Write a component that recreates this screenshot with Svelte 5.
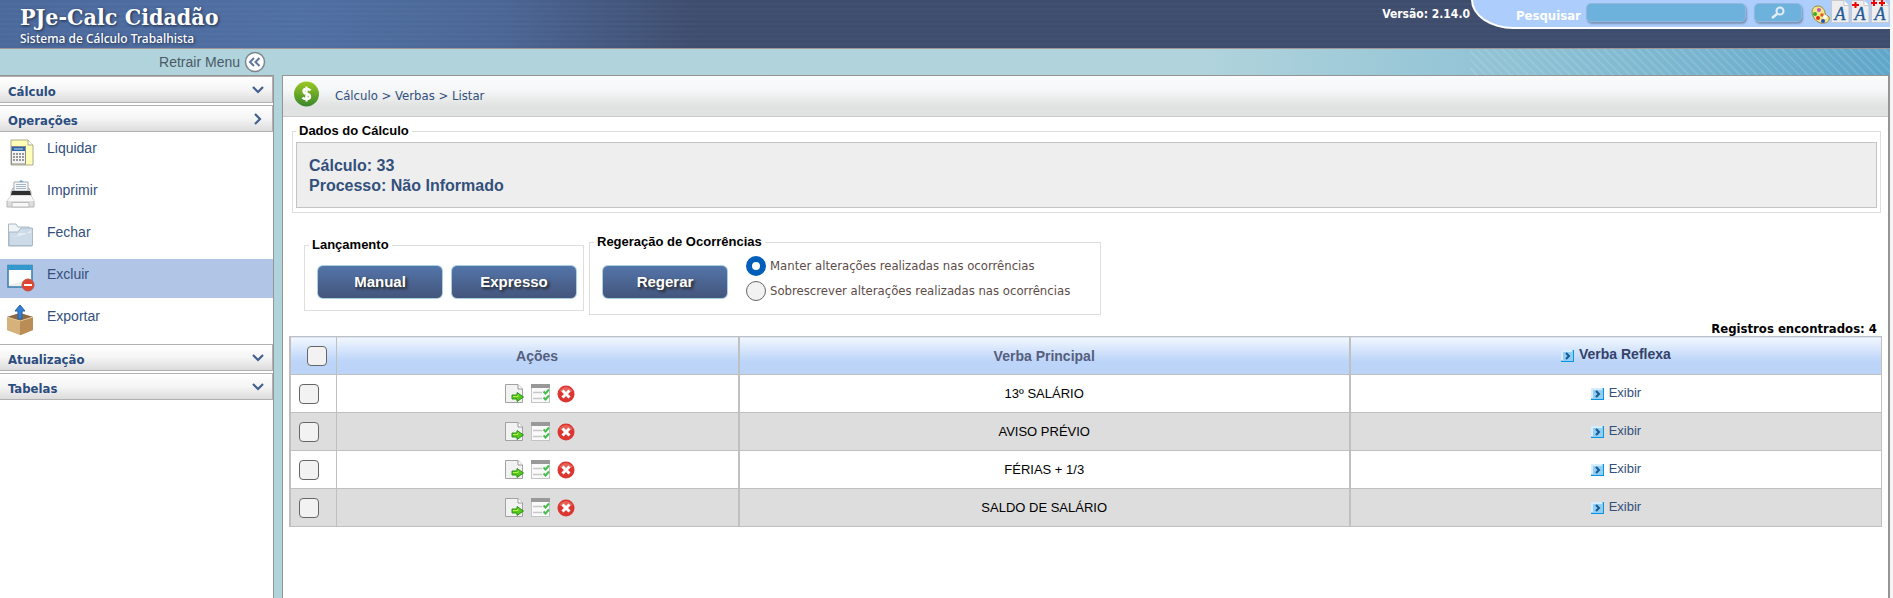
<script>
  const operations = [
    { label: 'Liquidar', icon: 'calc' },
    { label: 'Imprimir', icon: 'printer' },
    { label: 'Fechar', icon: 'folder' },
    { label: 'Excluir', icon: 'remove', active: true },
    { label: 'Exportar', icon: 'export' }
  ];
  const rows = $state([
    { name: '13º SALÁRIO', checked: false },
    { name: 'AVISO PRÉVIO', checked: false },
    { name: 'FÉRIAS + 1/3', checked: false },
    { name: 'SALDO DE SALÁRIO', checked: false }
  ]);
  let mode = $state('manter');
  let query = $state('');
  function toggleAll(e) {
    for (const r of rows) r.checked = e.currentTarget.checked;
  }
</script>

{#snippet section(label, open)}
  <button class="section" type="button" aria-expanded={open}>
    <span>{label}</span>
    <svg width="12" height="12" viewBox="0 0 12 12" fill="none" stroke="#43608f" stroke-width="2.2">
      {#if open}<path d="M3 1l5 5-5 5" />{:else}<path d="M1 3l5 5 5-5" />{/if}
    </svg>
  </button>
{/snippet}

{#snippet menuIcon(kind)}
  <svg width="30" height="32" viewBox="0 0 30 32">
    {#if kind === 'calc'}
      <path d="M5 5H22l5 5V30H5z" fill="#ffffb8" stroke="#aaa98c" />
      <path d="M22 5v5h5" fill="#fff" stroke="#aaa98c" />
      <rect x="5.500" y="11.500" width="14" height="17.500" fill="#f4f4f4" stroke="#8c8c8c" />
      <rect x="6" y="12" width="13" height="4" fill="#2d66a8" />
      <path d="M8 14h9" stroke="#c5dcf2" />
      <path d="M7 19h11M7 22h11M7 25h11" stroke="#999" stroke-width="2" stroke-dasharray="2 1" />
    {:else if kind === 'printer'}
      <path d="M13 5l2-2 3 2v3h-5z" fill="#4ba4df" />
      <path d="M5 15L7 11H23L25 15V19L28 24V30H1V24L5 19z" fill="#dedede" stroke="#b4b4b4" />
      <path d="M8 5H22V14H8z" fill="#f5f8fa" stroke="#a3abb2" />
      <path d="M10 7.500h10M10 9.500h10M10 11.500h10" stroke="#a7b4c0" />
      <path d="M6 14H24L25 18H5z" fill="#2f2f2f" />
      <path d="M5 19H25L28 24H1z" fill="#f8f8f8" />
      <path d="M6 25.500H23V30H6z" fill="#f7f7f7" stroke="#bcbcbc" />
    {:else if kind === 'folder'}
      <path d="M2.500 5H10l2 3h11l3 3v16H2.500z" fill="#eff3f6" stroke="#aab8c4" />
      <path d="M3 13H12l3-4H26.500V26.500H3z" fill="#cddae8" stroke="#a9bacb" />
      <path d="M4 17Q17 19 25 11V14H13l-2 3z" fill="#eef4f9" opacity=".7" />
    {:else if kind === 'remove'}
      <path d="M2 4.500H26V26H2z" fill="#eee" stroke="#397fac" stroke-width="1.500" />
      <path d="M2 4H26V9H2z" fill="#3497ce" />
      <path d="M3 9h22v9L3 24z" fill="#fff" />
      <circle cx="22" cy="24" r="6" fill="#e04434" stroke="#bd5646" />
      <path d="M18 24h8" stroke="#fff" stroke-width="2" />
    {:else}
      <path d="M1 14L14 10L27 14V27L15 32L1 27z" fill="#c9a066" />
      <path d="M1 14L14 18L27 14L14 10z" fill="#8b6944" />
      <path d="M14 18V32L1 27V14z" fill="#d5b17c" />
      <path d="M14 18V32L27 27V14z" fill="#b98d55" />
      <path d="M14 2l5 6h-3v8h-4V8H9z" fill="#347fd1" stroke="#2461a3" />
      <path d="M1 14l13 4 13-4" fill="none" stroke="#e5c893" />
    {/if}
  </svg>
{/snippet}

{#snippet arrow()}
  <svg class="arrow" width="13" height="12" viewBox="0 0 13 12">
    <rect width="13" height="12" fill="#91cdf4" />
    <path d="M0 0H11V2H2V10H0z" fill="#d5edff" />
    <path d="M12 0h1v12H0v-1h12z" fill="#0a93df" />
    <path d="M5 3l3 3-3 3" fill="none" stroke="#145b91" stroke-width="2" />
  </svg>
{/snippet}

{#snippet docA(plus)}
  <svg class="doc" width="19" height="23" viewBox="0 0 19 23">
    <path d="M.500 .500H13l5 5V22.500H.500z" fill="#eee" stroke="#c7c9cc" />
    <path d="M13 .500v5h5" fill="#fff" stroke="#c7c9cc" />
    <text x="9" y="20" text-anchor="middle" class="glyph">A</text>
    {#if plus === 1}<path d="M1 5h7M4.500 2v6" stroke="#f30000" stroke-width="2" />{/if}
    {#if plus === 2}<path d="M0 3h6M3 0v6M8 3h6M11 0v6" stroke="#f30000" stroke-width="2" />{/if}
  </svg>
{/snippet}

<div class="page">
  <header class="top">
    <div class="brand">
      <h1>PJe-Calc Cidadão</h1>
      <p>Sistema de Cálculo Trabalhista</p>
    </div>
    <div class="version">Versão: 2.14.0</div>
    <form class="search" onsubmit={(e) => e.preventDefault()}>
      <label for="q">Pesquisar</label>
      <input id="q" type="text" bind:value={query} />
      <button class="go" type="submit" aria-label="Pesquisar">
        <svg width="16" height="14" viewBox="0 0 16 14" fill="none" stroke="#e3eefa">
          <circle cx="10" cy="5" r="3.500" stroke-width="2" />
          <path d="M7 8L2 12" stroke-width="2.500" />
        </svg>
      </button>
      <div class="tools">
        <button type="button" aria-label="Contraste">
          <svg width="19" height="19" viewBox="0 0 19 19">
            <path d="M7 1C1 1 0 7 2 11c2 5 7 8 11 7 4 0 6-3 5-6-1-2-4-1-4-4 0-3-3-7-7-7z" fill="#f4e684" stroke="#98883a" />
            <circle cx="8" cy="5" r="2" fill="#c353bb" />
            <circle cx="4" cy="9" r="2" fill="#2fae31" />
            <circle cx="7" cy="13" r="2" fill="#e02a20" />
            <circle cx="11" cy="10" r="1.800" fill="#e45b21" />
            <circle cx="12" cy="16" r="2" fill="#2750c6" />
            <circle cx="14" cy="12" r="2" fill="#fff" />
          </svg>
        </button>
        <button type="button" aria-label="Fonte normal">{@render docA(0)}</button>
        <button type="button" aria-label="Fonte maior">{@render docA(1)}</button>
        <button type="button" aria-label="Fonte muito maior">{@render docA(2)}</button>
      </div>
    </form>
  </header>

  <div class="strip">
    <button class="collapse" type="button">
      Retrair Menu
      <svg width="22" height="22" viewBox="0 0 22 22">
        <circle cx="11" cy="11" r="9.500" fill="#fff" stroke="#7d8790" stroke-width="1.500" />
        <path d="M10 7L6 11l4 4M15.500 7L11.500 11l4 4" fill="none" stroke="#5f76a0" stroke-width="2" />
      </svg>
    </button>
  </div>

  <div class="body">
    <nav class="side">
      {@render section('Cálculo', false)}
      {@render section('Operações', true)}
      <ul>
        {#each operations as op}
          <li class:active={op.active}>
            <a href="#{op.icon}">{@render menuIcon(op.icon)}<span>{op.label}</span></a>
          </li>
        {/each}
      </ul>
      {@render section('Atualização', false)}
      {@render section('Tabelas', false)}
    </nav>

    <main>
      <div class="crumbs">
        <svg width="26" height="26" viewBox="0 0 26 26">
          <defs>
            <linearGradient id="coin" x2="0" y2="1">
              <stop offset="0" stop-color="#9bc922" />
              <stop offset="1" stop-color="#38862c" />
            </linearGradient>
          </defs>
          <circle cx="12.500" cy="13" r="12.500" fill="url(#coin)" />
          <path d="M16.500 9.500Q15.500 8 12.500 8Q9.500 8 9.500 10.200Q9.500 12.200 12.500 12.800Q16 13.400 16 15.800Q16 18 12.500 18Q9.500 18 8.500 16.500M12.500 5.500V20.500" fill="none" stroke="#fff" stroke-width="2.400" />
        </svg>
        <span>Cálculo &gt; Verbas &gt; Listar</span>
      </div>

      <div class="content">
        <fieldset class="data">
          <legend>Dados do Cálculo</legend>
          <div class="info">
            <div>Cálculo: 33</div>
            <div>Processo: Não Informado</div>
          </div>
        </fieldset>

        <div class="groups">
          <fieldset class="launch">
            <legend>Lançamento</legend>
            <div class="actions">
              <button class="primary" type="button">Manual</button>
              <button class="primary" type="button">Expresso</button>
            </div>
          </fieldset>
          <fieldset class="regen">
            <legend>Regeração de Ocorrências</legend>
            <div class="regen-row">
              <button class="primary" type="button">Regerar</button>
              <div class="radios">
                <label><input type="radio" name="mode" value="manter" bind:group={mode} />Manter alterações realizadas nas ocorrências</label>
                <label><input type="radio" name="mode" value="sobrescrever" bind:group={mode} />Sobrescrever alterações realizadas nas ocorrências</label>
              </div>
            </div>
          </fieldset>
        </div>

        <div class="count">Registros encontrados: 4</div>
        <table>
          <colgroup><col class="c1" /><col class="c2" /><col class="c3" /><col class="c4" /></colgroup>
          <thead>
            <tr>
              <th><input type="checkbox" aria-label="Selecionar todos" onchange={toggleAll} /></th>
              <th>Ações</th>
              <th>Verba Principal</th>
              <th><a class="dark" href="#reflexas">{@render arrow()}Verba Reflexa</a></th>
            </tr>
          </thead>
          <tbody>
            {#each rows as row}
              <tr>
                <td><input type="checkbox" aria-label={row.name} bind:checked={row.checked} /></td>
                <td>
                  <div class="icons">
                    <button type="button" aria-label="Parâmetros">
                      <svg width="19" height="19" viewBox="0 0 19 19">
                        <path d="M.500.500H13L17.500 5V18.500H.500z" fill="#f2f2f2" stroke="#a2a2a2" />
                        <path d="M13 .500V5h4.500" fill="#fff" stroke="#999" />
                        <path d="M7 11h5V8.500l6.500 4.500-6.500 4.500v-2.500H7z" fill="#55c91d" stroke="#2b9415" />
                        <path d="M8 12.500h5v-2" fill="none" stroke="#b8ef4b" />
                      </svg>
                    </button>
                    <button type="button" aria-label="Ocorrências">
                      <svg width="19" height="19" viewBox="0 0 19 19">
                        <rect x=".500" y=".500" width="18" height="18" fill="#fafafa" stroke="#c4c4c4" />
                        <rect width="19" height="4" fill="#999" />
                        <path d="M2 8.500h9M2 14.500h9" stroke="#c8c8c8" stroke-width="1.500" />
                        <path d="M12.500 7.500l2 2 3.500-4M12.500 13.500l2 2 3.500-4" fill="none" stroke="#45bd4c" stroke-width="2" />
                      </svg>
                    </button>
                    <button type="button" aria-label="Excluir">
                      <svg width="18" height="18" viewBox="0 0 18 18">
                        <circle cx="9" cy="9" r="8.500" fill="#dc3632" />
                        <path d="M2 6Q9-2 16 6Q9 9 2 6" fill="#f18d7c" opacity=".5" />
                        <path d="M5.500 5.500l7 7M12.500 5.500l-7 7" stroke="#fff" stroke-width="3" />
                      </svg>
                    </button>
                  </div>
                </td>
                <td>{row.name}</td>
                <td><a href="#exibir">{@render arrow()}Exibir</a></td>
              </tr>
            {/each}
          </tbody>
        </table>
      </div>
    </main>
  </div>
</div>

<style>
  :global(body) { background: #f5f5f5; }
  .page {
    --tahoma: "DejaVu Sans Condensed", "Noto Sans", sans-serif;
    --arial: "Liberation Sans", Arial, sans-serif;
    min-height: 100vh;
    margin-right: 3px;
    display: flex;
    flex-direction: column;
    font-family: var(--arial);
    font-size: 14px;
    color: #000;
  }
  .page *, .page { box-sizing: border-box; }
  button { font: inherit; border: 0; padding: 0; background: none; cursor: pointer; }
  svg { display: block; flex: none; }
  a { color: #33507c; text-decoration: none; }

  .top {
    display: flex;
    align-items: flex-start;
    height: 49px;
    border-bottom: 1px solid #a09698;
    background:
      repeating-linear-gradient(transparent 0 3px, rgba(255, 255, 255, .025) 3px 5px),
      linear-gradient(90deg, #4c699c 0, #4f6fa3 300px, #4b6695 500px, #3e4c6d 700px);
    color: #fff;
  }
  .brand { padding: 3px 0 0 20px; text-shadow: 1px 1px 3px #1d2c4a; white-space: nowrap; }
  h1 { margin: 0; font: bold 23px/28px "DejaVu Serif Condensed", "Liberation Serif", serif; }
  .brand p { margin: 0; font: 500 12px/16px "Noto Sans", sans-serif; }
  .version { margin-left: auto; padding-right: 1px; font: bold 12px/29px var(--tahoma); white-space: nowrap; }
  .search {
    display: flex;
    align-items: flex-start;
    height: 29px;
    padding-left: 43px;
    border: solid #fff;
    border-width: 0 0 2px 2px;
    border-bottom-left-radius: 44px 30px;
    background: #adcdfd;
  }
  .search label { width: 70px; font: bold 13px/31px var(--tahoma); }
  .search input, .go {
    height: 19px;
    margin-top: 3px;
    border: 1px solid #91b8dc;
    border-radius: 5px;
    background: #6db2dd;
    box-shadow: 1px 2px 2px #7d95b7;
  }
  .search input { width: 160px; padding: 0 5px; outline: 0; }
  .go { display: grid; place-items: center; width: 48px; margin-left: 8px; }
  .tools { display: flex; align-items: flex-start; gap: 1px; margin-left: 9px; }
  .tools button:first-child { padding-top: 5px; }
  .doc { overflow: visible; }
  .glyph { font: italic 18px "Liberation Serif", serif; fill: #1f5a9a; stroke: #1f5a9a; stroke-width: .3px; }

  .strip {
    height: 26px;
    background:
      repeating-linear-gradient(45deg, transparent 0 4px, rgba(255, 255, 255, .1) 4px 6px) right / 420px 100% no-repeat,
      linear-gradient(90deg, #b0d3dc 64%, #8bc0d4 82%, #5fa6c9);
  }
  .collapse { display: flex; align-items: center; justify-content: flex-end; gap: 4px; width: 266px; height: 26px; color: #4b5a66; }

  .body { flex: 1; display: flex; gap: 8px; background: #b0d3dc; }
  .side { width: 274px; flex: none; border: solid #959595; border-width: 1px 1px 0 0; background: #fff; }
  .section {
    display: flex;
    justify-content: space-between;
    align-items: center;
    width: 100%;
    height: 27px;
    margin-bottom: 2px;
    padding: 0 8px;
    border: solid #b1b1b1;
    border-width: 1px 1px 1px 0;
    background: linear-gradient(#fff, #f5f5f5 50%, #dcdcdc);
    font: bold 13px/22px var(--tahoma);
    color: #2b4d80;
  }
  .section span { padding-top: 4px; }
  ul { margin: -1px 0 0; padding: 0 0 1px; list-style: none; }
  li { height: 39px; margin-bottom: 3px; }
  li a { display: flex; gap: 11px; height: 39px; padding: 2px 6px; line-height: 26px; }
  .active { background: #b1c5e7; }

  main { flex: 1; min-width: 0; border: solid #959595; border-width: 1px 2px 0 1px; background: #fff; }
  .crumbs {
    display: flex;
    align-items: center;
    gap: 15px;
    height: 41px;
    padding: 0 11px 4px;
    border-bottom: 1px solid #c8c8c8;
    background: linear-gradient(#fafbfd, #f6f7f9 35%, #e1e3e2 75%);
    font: 13px/20px var(--tahoma);
    color: #33507c;
  }
  .crumbs span { padding-top: 3px; }
  .content { padding: 5px 6px 0; }
  fieldset { margin: 0; padding: 0; border: 1px solid #dedede; min-width: 0; }
  legend { margin-left: 4px; padding: 0 3px; font-weight: bold; font-size: 13px; line-height: 18px; }
  .data { margin: 0 1px 0 3px; padding: 2px 3px 4px; }
  .data legend { margin-left: 0; }
  .info { height: 66px; padding: 13px 12px; border: 1px solid #c4c4c4; background: #eee; font: bold 16px/20px var(--arial); color: #33507c; }
  .groups { display: flex; gap: 5px; padding: 20px 15px 0; }
  .launch { width: 280px; height: 75px; margin-top: 3px; }
  .regen { width: 512px; height: 82px; }
  .actions { display: flex; gap: 8px; padding: 11px 0 11px 12px; }
  .primary {
    flex: none;
    width: 126px;
    height: 34px;
    border: 1px solid #a9cfe2;
    border-radius: 6px;
    background: linear-gradient(#5375a9, #44557c);
    color: #fff;
    font: bold 15px/20px var(--arial);
    text-shadow: 2px 2px 3px #222;
  }
  .regen-row { display: flex; align-items: flex-start; gap: 18px; padding: 5px 12px; }
  .regen-row .primary { margin-top: 9px; }
  .radios { display: flex; flex-direction: column; gap: 5px; }
  .radios label { display: flex; align-items: center; gap: 4px; height: 20px; font: 13px/20px var(--tahoma); color: #5d4d4a; white-space: nowrap; }
  input[type="radio"], input[type="checkbox"] {
    appearance: none;
    display: block;
    width: 20px;
    height: 20px;
    margin: 0;
    border: 1px solid #666;
    border-radius: 50%;
    background: #f2f2f2;
  }
  input[type="radio"]:checked { border: 6px solid #005fb8; background: #fff; }
  input[type="checkbox"] { border-radius: 4px; }
  input[type="checkbox"]:checked { background: #005fb8; }
  .count { padding: 6px 5px 0 0; text-align: right; font: bold 13px/15px var(--tahoma); }
  table { width: 100%; table-layout: fixed; border-collapse: collapse; border: 1px solid #c0c0c0; border-left-width: 2px; }
  .c1 { width: 46px; }
  .c2 { width: 25.3%; }
  .c3 { width: 38.4%; }
  th, td { height: 38px; padding: 0; border: 1px solid #c0c0c0; text-align: center; vertical-align: middle; }
  td { font-size: 13px; }
  th:nth-child(n + 3), td:nth-child(n + 3) { border-left-width: 2px; }
  th { background: linear-gradient(#f2f7ff, #bbd4f8 65%); color: #565e7e; }
  th:first-child { padding-left: 16px; }
  td:first-child { padding-left: 8px; }
  tbody tr:nth-child(even) { background: #ddd; }
  .dark { color: #33426a; }
  td a, th a { display: inline-flex; align-items: center; gap: 5px; }
  .arrow { margin-top: 3px; }
  .icons { display: flex; justify-content: center; gap: 7px; padding-left: 5px; }
</style>
